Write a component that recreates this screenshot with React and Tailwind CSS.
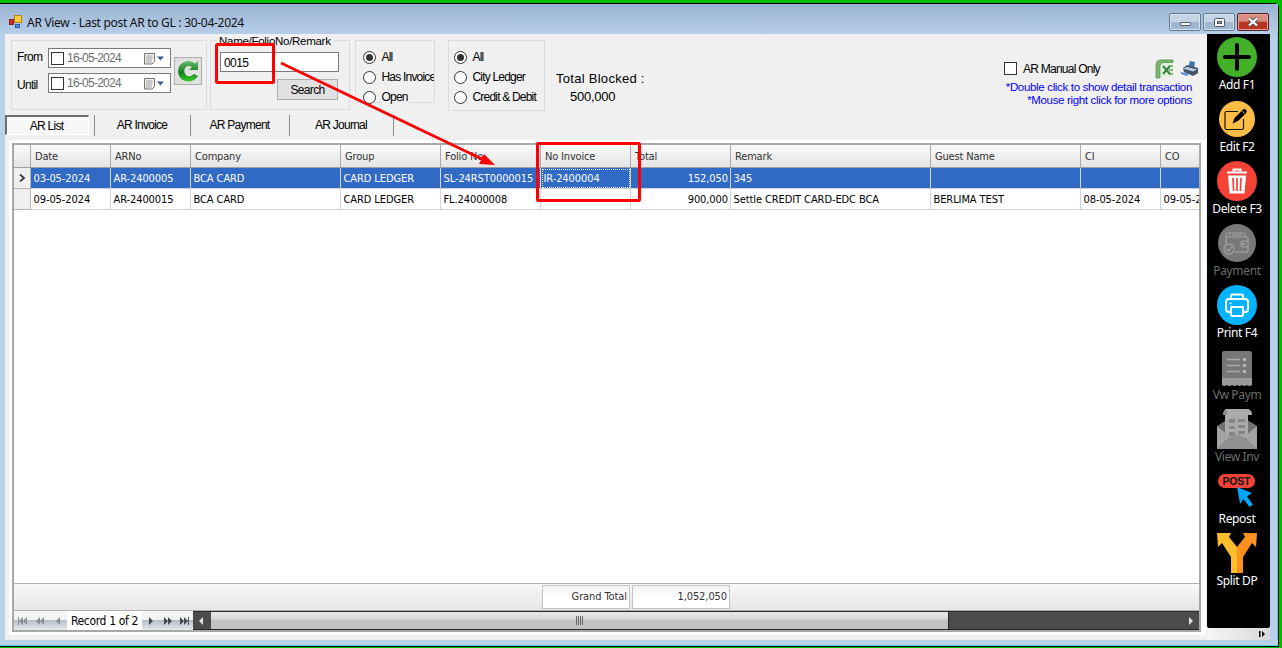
import { Fragment } from "react";
import clsx from "clsx";

const columns = [
  { key: "date", label: "Date", width: "w-[80px]" },
  { key: "arNo", label: "ARNo", width: "w-[80px]" },
  { key: "company", label: "Company", width: "w-[150px]" },
  { key: "group", label: "Group", width: "w-[100px]" },
  { key: "folio", label: "Folio No", width: "w-[100px]" },
  { key: "invoice", label: "No Invoice", width: "w-[90px]" },
  { key: "total", label: "Total", width: "w-[100px]", right: true },
  { key: "remark", label: "Remark", width: "w-[200px]" },
  { key: "guest", label: "Guest Name", width: "w-[150px]" },
  { key: "ci", label: "CI", width: "w-[80px]" },
  { key: "co", label: "CO", width: "w-[80px]" },
];

const rows = [
  { date: "03-05-2024", arNo: "AR-2400005", company: "BCA CARD", group: "CARD LEDGER", folio: "SL-24RST0000015", invoice: "IR-2400004", total: "152,050", remark: "345" },
  { date: "09-05-2024", arNo: "AR-2400015", company: "BCA CARD", group: "CARD LEDGER", folio: "FL.24000008", total: "900,000", remark: "Settle CREDIT CARD-EDC BCA", guest: "BERLIMA TEST", ci: "08-05-2024", co: "09-05-2024" },
];

const tabs = [
  { label: "AR Invoice", width: "w-[96px]" },
  { label: "AR Payment", width: "w-[99px]" },
  { label: "AR Journal", width: "w-[104px]" },
];

const actions = [
  { label: "Add F1", icon: AddIcon },
  { label: "Edit F2", icon: EditIcon },
  { label: "Delete F3", icon: DeleteIcon },
  { label: "Payment", icon: PaymentIcon, disabled: true },
  { label: "Print F4", icon: PrintIcon },
  { label: "Vw Paym", icon: ReceiptIcon, disabled: true },
  { label: "View Inv", icon: InvoiceIcon, disabled: true },
  { label: "Repost", icon: RepostIcon },
  { label: "Split DP", icon: SplitIcon },
];

function AddIcon() {
  return (
    <svg width="40" height="40" viewBox="0 0 40 40">
      <circle cx="20" cy="20" r="20" fill="#43b02a" />
      <path d="M20 8v24M8 20h24" stroke="#000" strokeWidth="4" strokeLinecap="round" />
    </svg>
  );
}

function EditIcon() {
  return (
    <svg width="40" height="40" viewBox="0 0 40 40" fill="none">
      <circle cx="20" cy="20" r="18" fill="#ffbd45" />
      <path d="M21 12.500H9.500Q8 12.500 8 14v15q0 1.500 1.500 1.500h15.500q1.500 0 1.500-1.500V20" stroke="#151515" strokeWidth="1.200" />
      <path d="M15.500 24.500l2-5.500 8-8q1.500-1.800 3.500-.2 1.600 1.700 0 3.400L21 22z" fill="#000" />
      <path d="M24.500 11.500l3.500 3.200" stroke="#ffbd45" strokeWidth=".8" />
    </svg>
  );
}

function DeleteIcon() {
  return (
    <svg width="40" height="40" viewBox="0 0 40 40" fill="none">
      <circle cx="20" cy="20" r="20" fill="#f44336" />
      <path d="M10 11.500h20M16.500 10.500V8.500h7v2" stroke="#fff" strokeWidth="2" />
      <path d="M11 14.500h18l-1.500 18h-15z" fill="#fff" />
      <path d="M16 17l.6 13M20 17v13M24 17l-.6 13" stroke="#f44336" strokeWidth="1.700" />
    </svg>
  );
}

function PaymentIcon() {
  return (
    <svg width="40" height="40" viewBox="0 0 40 40" fill="none">
      <circle cx="20" cy="20" r="19" fill="#787878" />
      <g stroke="#a3a3a3" strokeWidth="1.200">
        <path d="M9 22V12q0-2 2-2h15q2 0 2 2v2M9 14h20q2 0 2 2v11q0 2-2 2H18M12 12h1M15 12h10" />
        <path d="M31 18h-5q-2 0-2 3t2 3h5" />
        <circle cx="12" cy="26" r="5" fill="#787878" />
        <path d="M9.500 26l2 2 3-4" />
      </g>
      <circle cx="26.500" cy="21" r="1" fill="#b5b5b5" />
    </svg>
  );
}

function PrintIcon() {
  return (
    <svg width="40" height="40" viewBox="0 0 40 40" fill="none">
      <circle cx="20" cy="20" r="20" fill="#00b4ff" />
      <g stroke="#fff" strokeWidth="2" strokeLinejoin="round">
        <path d="M14 14v-3q0-1.500 1.500-1.500h9q1.500 0 1.500 1.500v3" />
        <path d="M14 27h-2q-3 0-3-3v-7q0-3 3-3h16q3 0 3 3v7q0 3-3 3h-2" />
        <path d="M14 22h12v7.500q0 1.500-1.500 1.500h-9q-1.500 0-1.500-1.500z" />
      </g>
      <path d="M12.500 18.500h2" stroke="#fff" strokeWidth="1.500" />
    </svg>
  );
}

function ReceiptIcon() {
  return (
    <svg width="40" height="40" viewBox="0 0 40 40" fill="none">
      <path d="M5 6q0-2 2-2h26q2 0 2 2v25H5z" fill="#777" />
      <path d="M5 31h30v7q-2.500 2-5 0-2.500 2-5 0-2.500 2-5 0-2.500 2-5 0-2.500 2-5 0-2.500 2-5 0z" fill="#999" />
      <path d="M10 12.500h13M10 18.500h13M10 24.500h13" stroke="#aaa" strokeWidth="1.300" />
      <path d="M26 12.500h3M26 18.500h3M26 24.500h3" stroke="#c2c2c2" strokeWidth="2.500" />
    </svg>
  );
}

function InvoiceIcon() {
  return (
    <svg width="40" height="40" viewBox="0 0 40 40" fill="none">
      <path d="M0 17l8-5h24l8 5v23H0z" fill="#717171" />
      <path d="M9 0h22q4 1 4 6h-4v23H8V6z" fill="#aaa" />
      <path d="M9 0q-3 1-3 6h4q0-3-1-6z" fill="#8b8b8b" />
      <path d="M12 10h6v4h-6zM21 10h7v3h-7zM12 17h6v3h-6zM21 16h7v3h-7zM12 23h6v4h-6zM21 22h7v3h-7z" fill="#858585" />
      <path d="M0 17l13 11L0 40zM40 17L27 28l13 12z" fill="#a3a3a3" />
      <path d="M0 40l15-13q5-3 10 0l15 13z" fill="#919191" />
    </svg>
  );
}

function RepostIcon() {
  return (
    <svg width="40" height="40" viewBox="0 0 40 40">
      <rect x="1" y="3" width="37" height="14" rx="7" fill="#f44336" />
      <text x="19.500" y="14" textAnchor="middle" fontFamily="Liberation Sans" fontWeight="700" fontSize="10.500" textLength="28" fill="#111">POST</text>
      <path d="M20 16l15 6-5 3.500 6 8-3.500 2.500-6-8-3.500 5z" fill="#00a6f5" />
    </svg>
  );
}

function SplitIcon() {
  return (
    <svg width="40" height="40" viewBox="0 0 40 40">
      <path d="M0 0h14l-2 4 8 10v26h-6V24L5 10l-4 4z" fill="#fdbd2c" />
      <path d="M40 0H26l2 4-8 10v26h6V24l9-14 4 4z" fill="#ff921f" />
    </svg>
  );
}

function TitleBar() {
  const button = "flex h-[18px] items-center justify-center rounded-[2px] border border-[#65798f] shadow-[inset_0_0_0_1px_#d5e2ef]";
  return (
    <div className="flex h-[30px] shrink-0 items-center bg-linear-to-b from-[#9ab4d1] to-[#b6cde8] pl-[9px] pr-[9px]">
      <svg width="13" height="14" viewBox="0 0 13 14" className="mt-[5px]">
        <rect x="5.500" y=".5" width="7" height="7" fill="#fcca3c" stroke="#b78318" />
        <rect x=".5" y="4.500" width="4" height="5" fill="#c92b20" stroke="#8b211b" />
        <rect x="6.500" y="9.500" width="4" height="3" fill="#518be0" stroke="#315caa" />
      </svg>
      <span className="ml-[5px] mt-[8px] font-['Noto_Sans',sans-serif] text-[12px] tracking-[-0.29px] text-[#111]">AR View - Last post AR to GL : 30-04-2024</span>
      <div className="ml-auto mt-[6px] flex gap-[2px]">
        <div className={clsx(button, "w-[32px] bg-linear-to-b from-[#c5d5e6] from-50% to-[#9fb7d1] to-50%")}>
          <div className="mt-[3px] h-[4px] w-[11px] rounded-[1px] border border-[#555d67] bg-[#f5f5f5]" />
        </div>
        <div className={clsx(button, "w-[32px] bg-linear-to-b from-[#c5d5e6] from-50% to-[#9fb7d1] to-50%")}>
          <svg width="11" height="9" viewBox="0 0 11 9">
            <rect x=".5" y=".5" width="10" height="8" rx="1" fill="#f4f4f4" stroke="#4c5662" />
            <rect x="3.500" y="3.500" width="4" height="2" fill="#90a9c3" stroke="#4c5662" />
          </svg>
        </div>
        <div className="flex h-[18px] w-[32px] items-center justify-center rounded-[2px] border border-[#541c20] bg-linear-to-b from-[#d88d82] from-45% to-[#b93422] to-50% shadow-[inset_0_0_0_1px_#e6a69c]">
          <svg width="12" height="10" viewBox="0 0 12 10">
            <path d="M2 1.500l8 7M10 1.500l-8 7" stroke="#514d58" strokeWidth="4" />
            <path d="M2 1.500l8 7M10 1.500l-8 7" stroke="#fff" strokeWidth="2.300" />
          </svg>
        </div>
      </div>
    </div>
  );
}

function DateField() {
  return (
    <div className="flex h-[20px] w-[123px] items-center border border-[#7a7a7a] bg-white pl-[2px]">
      <span className="h-[13px] w-[13px] border border-[#333]" />
      <span className="ml-[3px] w-[76px] text-[12px] tracking-[-0.75px] text-[#6d6d6d]">16-05-2024</span>
      <svg width="22" height="13" viewBox="0 0 22 13">
        <path d="M1.500 1.500h10v8l-2.500 2.500h-7.500z" fill="#f3f3f3" stroke="#77716e" />
        <path d="M3 4h7M3 6h7M3 8h6M3 10h5M4 3v8M6 3v8M8 3v8" stroke="#aaa7aa" strokeWidth=".7" />
        <path d="M14 4.500h7l-3.500 4z" fill="#435d8e" />
      </svg>
    </div>
  );
}

function Radio({ label, checked }) {
  return (
    <div className="flex h-[20px] items-center gap-[5.500px] whitespace-nowrap">
      <span className="flex h-[13px] w-[13px] shrink-0 items-center justify-center rounded-full border border-[#333] bg-white">
        {checked && <span className="h-[7px] w-[7px] rounded-full bg-[#333]" />}
      </span>
      <span className="bg-[#f0f0f0]">{label}</span>
    </div>
  );
}

function Filters() {
  return (
    <div className="flex h-[81px] shrink-0 pl-[6px] text-[12px] tracking-[-0.8px]">
      <div className="mt-[6px] flex h-[70px] w-[196px] border border-[#dcdcdc] pl-[5px] pt-[7px]">
        <div className="flex w-[31px] flex-col tracking-[-0.7px]">
          <span className="h-[28px] leading-[18px]">From</span>
          <span className="leading-[18px]">Until</span>
        </div>
        <div className="flex flex-col gap-[5px]">
          <DateField />
          <DateField />
        </div>
        <div className="ml-[3px] mt-[9px] flex h-[28px] w-[28px] items-center justify-center border border-[#adadad] bg-[#e1e1e1]">
          <svg width="22" height="22" viewBox="0 0 22 22">
            <defs>
              <linearGradient id="refresh" x1="0" y1="0" x2="0" y2="1">
                <stop stopColor="#65bd6f" />
                <stop offset=".55" stopColor="#157d20" />
                <stop offset="1" stopColor="#31cf22" />
              </linearGradient>
            </defs>
            <path d="M21 1v9h-9l3-3q-4-2-6.500.5Q6 11 8.500 14.500q4 4 8.500-.5l4 2q-3 5-9.500 5.500Q2 21 1 12 1 3 10 1q5-.5 8 2.500z" fill="url(#refresh)" />
          </svg>
        </div>
      </div>

      <fieldset className="ml-[3px] h-[76px] w-[140px] border border-[#dcdcdc] pl-[9px]">
        <legend className="-ml-[3px] mt-[1px] h-[12px] whitespace-nowrap px-[2px] text-[11.500px] leading-[14px] tracking-[-0.28px]">Name/FolioNo/Remark</legend>
        <div className="mt-[6px] flex h-[20px] w-[119px] items-center border border-[#7a7a7a] bg-white pl-[3px] pt-[1px] tracking-[-0.6px]">0015</div>
        <div className="ml-[57px] mt-[7px] flex h-[21px] w-[61px] items-center justify-center border border-[#adadad] bg-[#e1e1e1] pt-[1px] tracking-[-0.65px]">Search</div>
      </fieldset>

      <div className="ml-[5px] mt-[6px] h-[63px] w-[80px] overflow-x-clip border border-[#dcdcdc] pl-[7px] pt-[6px]">
        <Radio label="All" checked />
        <Radio label="Has Invoice" />
        <Radio label="Open" />
      </div>
      <div className="ml-[13px] mt-[6px] h-[71px] w-[97px] border border-[#dcdcdc] pl-[5px] pt-[6px]">
        <Radio label="All" checked />
        <Radio label="City Ledger" />
        <Radio label="Credit & Debit" />
      </div>

      <div className="ml-[11px] mt-[36px] text-[13px] leading-[18px] tracking-[0.28px]">
        <div>Total Blocked :</div>
        <div className="pl-[14px] tracking-[-0.25px]">500,000</div>
      </div>

      <div className="ml-auto mt-[23px] w-[207px] pr-[15px]">
        <div className="flex h-[23px] items-center pl-[4px]">
          <span className="h-[13px] w-[13px] shrink-0 border border-[#333] bg-white" />
          <span className="ml-[6px] w-[132px] shrink-0 tracking-[-0.75px]">AR Manual Only</span>
          <svg width="20" height="20" viewBox="0 0 20 20" className="shrink-0">
            <path d="M6 4h12v14H6z" fill="#e3f1df" />
            <path d="M14 6h4v2h-4zM14 10h4v2h-4zM14 14h4v2h-4z" fill="#86bb76" />
            <path d="M1 19V6q0-5 5-5h12v2.500H8Q5 4 5 7v12z" fill="#7db56c" stroke="#4a8a46" strokeWidth=".7" />
            <path d="M8 7l7 8M15 7l-7 8" stroke="#318438" strokeWidth="2" />
          </svg>
          <svg width="18" height="17" viewBox="0 0 18 17" className="ml-[6px] shrink-0">
            <path d="M9 1l5 1-1 6H7z" fill="#3f75b1" />
            <path d="M2 8l4-3 11 3v5l-5 3-9-4z" fill="#465467" />
            <path d="M2 8.500l4-1.500 10 2.500-4 2z" fill="#b9cddd" />
            <path d="M0 12l8 1.500-2 2.500-6-2z" fill="#5c91cc" />
          </svg>
        </div>
        <div className="flex flex-col items-end pt-[1px] text-[11.500px] leading-[13px] tracking-[-0.33px] text-[#0000ff]">
          <div className="whitespace-nowrap">*Double click to show detail transaction</div>
          <div className="whitespace-nowrap">*Mouse right click for more options</div>
        </div>
      </div>
    </div>
  );
}

function Tabs() {
  return (
    <div className="flex h-[25px] shrink-0 text-[12px] tracking-[-0.75px]">
      <div className="flex h-[20px] w-[84px] items-center justify-center border-l-2 border-t-2 border-b border-r border-l-[#6d6d6d] border-t-[#6d6d6d] border-b-white border-r-white bg-[#f7f7f7] pr-[2px] pt-[1px]">AR List</div>
      <span className="ml-[5px] h-[21px] w-px bg-[#8c8c8c]" />
      {tabs.map((tab) => (
        <Fragment key={tab.label}>
          <div className={clsx("flex h-[20px] items-center justify-center pr-[2px]", tab.width)}>{tab.label}</div>
          <span className="h-[21px] w-px shrink-0 -ml-px bg-[#8c8c8c]" />
        </Fragment>
      ))}
    </div>
  );
}

function Row({ row, selected }) {
  return (
    <div className={clsx("flex h-[21px] shrink-0", selected ? "bg-[#316ac5] text-white" : "text-black")}>
      <div className="flex w-[17px] shrink-0 items-center justify-center border-b border-r border-[#b4b4b4] bg-[#efefef]">
        {selected && (
          <svg width="7" height="8" viewBox="0 0 7 8">
            <path d="M1 .5L5 4 1 7.500" fill="none" stroke="#333" strokeWidth="1.700" />
          </svg>
        )}
      </div>
      {columns.map((col) => (
        <div
          key={col.key}
          className={clsx(
            "flex shrink-0 items-center overflow-hidden whitespace-nowrap border-b border-r border-[#cfd5e5] pt-[2px]",
            col.width,
            col.right ? "justify-end pr-[2px]" : "pl-[2.500px]",
            selected && col.key === "invoice" && "outline-dotted outline-1 -outline-offset-2 outline-white"
          )}
        >
          {row[col.key]}
        </div>
      ))}
    </div>
  );
}

function Navigator() {
  return (
    <div className="flex h-[19px] w-[179px] shrink-0 items-center bg-linear-to-b from-[#f1f3f5] from-45% via-[#b5c0c9] via-50% to-[#e5e9ec]">
      <svg width="53" height="10" viewBox="0 0 53 10" fill="#8c8f93">
        <path d="M4 1h1v8H4zM9 1v8L5 5zM13 1v8L9 5zM26 1v8l-4-4zM30 1v8l-4-4zM46 1v8l-4-4z" />
      </svg>
      <div className="flex h-[19px] w-[75px] items-center justify-center bg-white text-[12px] tracking-[-0.35px] text-black">Record 1 of 2</div>
      <svg width="51" height="10" viewBox="0 0 51 10" fill="#474a4e">
        <path d="M7 1v8l4-4zM22 1v8l4-4zM26 1v8l4-4zM38 1v8l4-4zM42 1v8l4-4zM46 1h1v8h-1z" />
      </svg>
    </div>
  );
}

function Grid() {
  return (
    <div className="ml-[4px] flex h-[495px] w-[1197px] flex-col bg-white pl-[3px] pr-[5px] pt-[3px] font-['DejaVu_Sans_Condensed','DejaVu_Sans',sans-serif] text-[11px] tracking-[-0.09px]">
      <div className="flex h-[489px] flex-col overflow-hidden border-2 border-[#a8a8a8]">
        <div className="flex h-[23px] shrink-0 border-b border-[#a0a0a0] bg-linear-to-b from-[#fafafa] to-[#e5e5e5] tracking-[-0.17px] text-[#333]">
          <div className="w-[17px] shrink-0 border-r border-[#aaa]" />
          {columns.map((col) => (
            <div key={col.key} className={clsx("flex shrink-0 items-center border-r border-[#aaa] pl-[4px] pt-[2px]", col.width)}>{col.label}</div>
          ))}
        </div>
        <Row row={rows[0]} selected />
        <Row row={rows[1]} />
        <div className="grow" />
        <div className="flex h-[28px] shrink-0 items-center gap-[2px] border-y border-[#b0b0b0] bg-linear-to-b from-[#f8f8f8] to-[#e6e6e6] pl-[528px] text-[#333]">
          <div className="flex h-[24px] w-[88px] items-center justify-end border border-[#c5c5c5] bg-linear-to-b from-[#f1f1f1] to-white to-50% pr-[2px] pt-[1px]">Grand Total</div>
          <div className="flex h-[24px] w-[98px] items-center justify-end border border-[#c5c5c5] bg-linear-to-b from-[#f1f1f1] to-white to-50% pr-[2px] pt-[1px]">1,052,050</div>
        </div>
        <div className="flex h-[19px] shrink-0">
          <Navigator />
          <div className="flex grow border-y border-[#28282c] bg-[#4b4b4b]">
            <div className="flex w-[18px] items-center pl-[5px]">
              <svg width="6" height="8" viewBox="0 0 6 8" fill="#e0e0e0"><path d="M5 0v8L1 4z" /></svg>
            </div>
            <div className="flex w-[738px] items-center justify-center gap-px border-r border-[#26262c] bg-linear-to-b from-[#e9e9e9] from-0% via-[#d7d7d7] via-42% to-[#c3c3c5] to-48%">
              {[0, 1, 2, 3].map((n) => <span key={n} className="h-[9px] w-px bg-[#666]" />)}
            </div>
            <div className="ml-auto flex w-[11px] items-center">
              <svg width="6" height="8" viewBox="0 0 6 8" fill="#e0e0e0"><path d="M1 0v8l4-4z" /></svg>
            </div>
          </div>
        </div>
      </div>
    </div>
  );
}

function ActionBar() {
  return (
    <aside className="flex w-[63px] shrink-0 flex-col bg-[#f0f0f0]">
      <div className="flex h-[594px] flex-col rounded-b-[2px] bg-black pr-[3px] pt-[3px]">
        {actions.map(({ label, icon: Icon, disabled }) => (
          <div key={label} className="flex h-[62px] shrink-0 flex-col items-center">
            <Icon />
            <span className={clsx("whitespace-nowrap font-['Noto_Sans',sans-serif] text-[12px] leading-[15px] tracking-[-0.35px]", disabled ? "text-[#6d6d6d]" : "text-white")}>{label}</span>
          </div>
        ))}
      </div>
      <div className="flex grow items-center justify-end bg-linear-to-r from-[#f5f5f5] to-[#d9d9d9] pr-[4px]">
        <svg width="7" height="6" viewBox="0 0 7 6"><path d="M0 0h1.500v6H0zM3 0v6l3-3z" fill="#000" /></svg>
      </div>
    </aside>
  );
}

function Callouts() {
  return (
    <svg className="pointer-events-none absolute left-0 top-0" width="1282" height="648" fill="none">
      <rect x="216.500" y="44.500" width="57" height="38" rx="1" stroke="#f00" strokeWidth="3" />
      <rect x="537.500" y="143.500" width="102" height="57" rx="1" stroke="#f00" strokeWidth="3" />
      <path d="M281 63l203 97" stroke="#f00" strokeWidth="2.800" />
      <path d="M495 165l-16-1 5-10z" fill="#f00" />
    </svg>
  );
}

export default function App() {
  return (
    <div className="relative h-[648px] w-[1282px] overflow-hidden bg-[#00be00] pt-[3px] font-['Liberation_Sans',Arial,sans-serif] text-black">
      <div className="flex h-[644px] w-[1279px] flex-col rounded-tr-[5px] border-b border-r border-t border-black bg-[#b9d0eb]">
        <TitleBar />
        <div className="flex h-[606px] shrink-0 border-r border-[#54d5dd] pl-[5px] pr-[7px]">
          <main className="flex w-[1202px] shrink-0 flex-col bg-[#f0f0f0]">
            <Filters />
            <Tabs />
            <Grid />
          </main>
          <ActionBar />
        </div>
        <div className="mt-auto h-px shrink-0 bg-[#54d5dd]" />
      </div>
      <Callouts />
    </div>
  );
}
